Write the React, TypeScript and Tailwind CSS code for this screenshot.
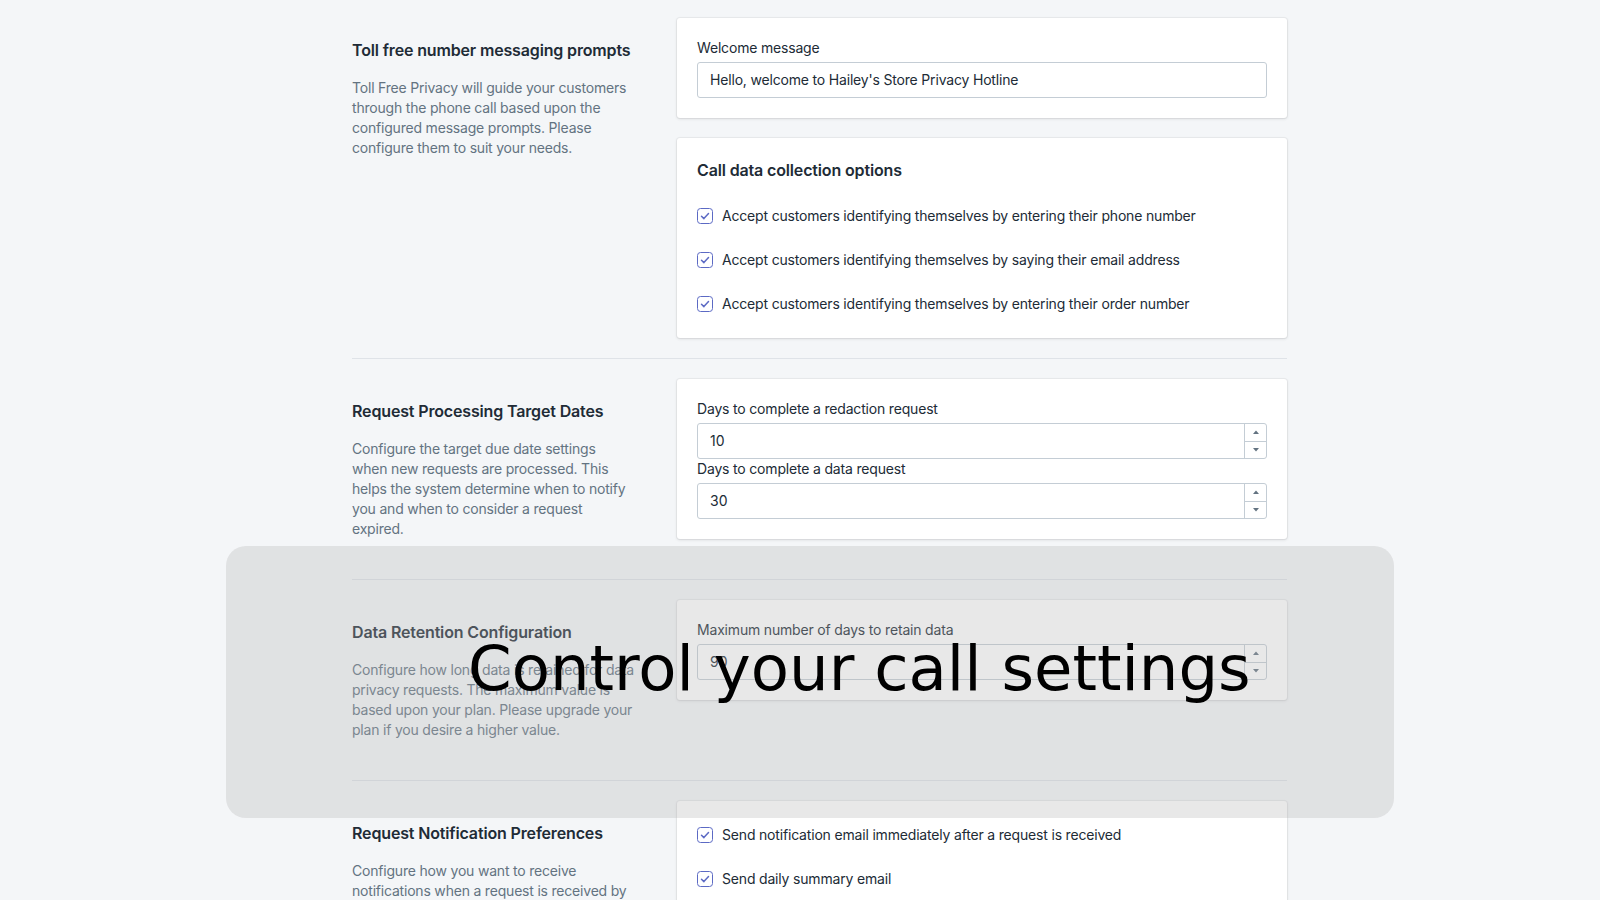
import React from "react";

function Checkbox() {
    return (
        <svg viewBox="0 0 16 16" className="h-4 w-4 shrink-0">
            <rect x="0.5" y="0.5" width="15" height="15" rx="3" fill="#fff" stroke="#5c6ac4" />
            <path d="M4.5 8.2l2.4 2.4 4.6-5" fill="none" stroke="#5c6ac4" strokeWidth="1.5" strokeLinecap="round" strokeLinejoin="round" />
        </svg>
    );
}

function CheckRow({ label }: { label: string }) {
    return (
        <label className="flex items-center gap-[9px] text-sm leading-5 tracking-[-0.18px] text-[#212b36]">
            <Checkbox />
            {label}
        </label>
    );
}

function Card({ children, className = "" }: { children: React.ReactNode; className?: string }) {
    return (
        <div className={"rounded-[3px] bg-white shadow-[0_0_0_1px_rgba(63,63,68,0.05),0_1px_3px_0_rgba(63,63,68,0.15)] " + className}>
            {children}
        </div>
    );
}

function Label({ children }: { children: React.ReactNode }) {
    return <div className="text-sm leading-5 tracking-[-0.18px] text-[#212b36]">{children}</div>;
}

function TextInput({ value }: { value: string }) {
    return (
        <div className="mt-1 flex h-9 items-center rounded-[3px] border border-[#c4cdd5] bg-white px-3 text-sm tracking-[-0.18px] text-[#212b36]">
            {value}
        </div>
    );
}

function NumberInput({ value }: { value: string }) {
    return (
        <div className="mt-1 flex h-9 rounded-[3px] border border-[#c4cdd5] bg-white text-sm text-[#212b36]">
            <div className="flex flex-1 items-center px-3">{value}</div>
            <div className="flex w-[22px] flex-col border-l border-[#c4cdd5]">
                <div className="flex flex-1 items-center justify-center border-b border-[#c4cdd5]">
                    <svg viewBox="0 0 6 4" className="h-[4px] w-[6px]">
                        <path d="M0 4L3 0.5L6 4Z" fill="#637381" />
                    </svg>
                </div>
                <div className="flex flex-1 items-center justify-center">
                    <svg viewBox="0 0 6 4" className="h-[4px] w-[6px]">
                        <path d="M0 0L3 3.5L6 0Z" fill="#637381" />
                    </svg>
                </div>
            </div>
        </div>
    );
}

// lines are given explicitly so the wrapping matches the design
function Intro({ title, lines }: { title: string; lines: string[] }) {
    return (
        <div className="py-5">
            <h2 className="text-base font-semibold leading-6 tracking-[-0.15px] text-[#212b36]">{title}</h2>
            <p className="mt-4 text-sm leading-5 tracking-[-0.2px] text-[#637381]">
                {lines.map((line, i) => (
                    <React.Fragment key={i}>
                        {i > 0 && <br />}
                        {line}
                    </React.Fragment>
                ))}
            </p>
        </div>
    );
}

function Divider() {
    return <div className="my-5 border-t border-[#dfe3e8]" />;
}

export default function App() {
    return (
        <div className="relative h-[900px] overflow-hidden bg-[#f4f6f8] font-['Inter',sans-serif]">
            <div className="ml-[352px] w-[935px] pt-[18px]">
                {/* Messaging prompts */}
                <div className="grid grid-cols-3 gap-x-10">
                    <Intro
                        title="Toll free number messaging prompts"
                        lines={[
                            "Toll Free Privacy will guide your customers",
                            "through the phone call based upon the",
                            "configured message prompts. Please",
                            "configure them to suit your needs.",
                        ]}
                    />
                    <div className="col-span-2 flex flex-col gap-5">
                        <Card className="p-5">
                            <Label>Welcome message</Label>
                            <TextInput value="Hello, welcome to Hailey's Store Privacy Hotline" />
                        </Card>
                        <Card className="px-5 pb-6 pt-5">
                            <h3 className="text-base font-semibold leading-6 tracking-[-0.15px] text-[#212b36]">Call data collection options</h3>
                            <div className="mt-6 flex flex-col gap-6">
                                <CheckRow label="Accept customers identifying themselves by entering their phone number" />
                                <CheckRow label="Accept customers identifying themselves by saying their email address" />
                                <CheckRow label="Accept customers identifying themselves by entering their order number" />
                            </div>
                        </Card>
                    </div>
                </div>

                <Divider />

                {/* Target dates */}
                <div className="grid grid-cols-3 gap-x-10">
                    <Intro
                        title="Request Processing Target Dates"
                        lines={[
                            "Configure the target due date settings",
                            "when new requests are processed. This",
                            "helps the system determine when to notify",
                            "you and when to consider a request",
                            "expired.",
                        ]}
                    />
                    <div className="col-span-2">
                        <Card className="p-5">
                            <Label>Days to complete a redaction request</Label>
                            <NumberInput value="10" />
                            <Label>Days to complete a data request</Label>
                            <NumberInput value="30" />
                        </Card>
                    </div>
                </div>

                <Divider />

                {/* Retention */}
                <div className="grid grid-cols-3 gap-x-10">
                    <Intro
                        title="Data Retention Configuration"
                        lines={[
                            "Configure how long data is retained for data",
                            "privacy requests. The maximum value is",
                            "based upon your plan. Please upgrade your",
                            "plan if you desire a higher value.",
                        ]}
                    />
                    <div className="col-span-2">
                        <Card className="p-5">
                            <Label>Maximum number of days to retain data</Label>
                            <NumberInput value="90" />
                        </Card>
                    </div>
                </div>

                <Divider />

                {/* Notifications */}
                <div className="grid grid-cols-3 gap-x-10">
                    <Intro
                        title="Request Notification Preferences"
                        lines={[
                            "Configure how you want to receive",
                            "notifications when a request is received by",
                            "Toll Free Privacy.",
                        ]}
                    />
                    <div className="col-span-2">
                        <Card className="px-5 pb-6 pt-6">
                            <div className="flex flex-col gap-6">
                                <CheckRow label="Send notification email immediately after a request is received" />
                                <CheckRow label="Send daily summary email" />
                                <CheckRow label="Send weekly summary email" />
                            </div>
                        </Card>
                    </div>
                </div>
            </div>

            {/* caption overlay */}
            <div className="absolute left-[226px] top-[546px] h-[272px] w-[1168px] rounded-[20px] bg-[rgba(180,180,180,0.3)]">
                <div className="absolute left-[242px] top-[92px] whitespace-nowrap font-['DejaVu_Sans',sans-serif] text-[62.5px] leading-none text-black">
                    Control your call settings
                </div>
            </div>
        </div>
    );
}
